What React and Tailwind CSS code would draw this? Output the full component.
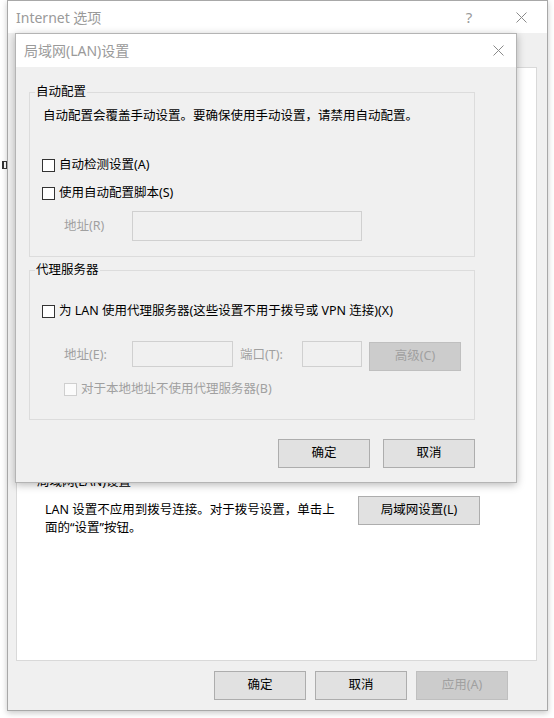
import React from "react"

const font = "font-['Noto_Sans','Noto_Sans_CJK_SC',sans-serif]"

function Check({ disabled }) {
    return (
        <span className={disabled
            ? "w-[13px] h-[13px] shrink-0 border border-[#cfcfcf] bg-[#fbfbfb]"
            : "w-[13px] h-[13px] shrink-0 border border-[#333333] bg-white"} />
    )
}

function Btn({ children, disabled, w = "w-[92px]" }) {
    return (
        <div className={`${w} h-[29px] flex items-center justify-center border ${disabled
            ? "bg-[#cccccc] border-[#bfbfbf] text-[#a0a0a0]"
            : "bg-[#e1e1e1] border-[#adadad] text-black"}`}>
            {children}
        </div>
    )
}

function CloseX({ size = 11 }) {
    return (
        <svg width={size} height={size} viewBox="0 0 11 11">
            <path d="M0.5 0.5 L10.5 10.5 M10.5 0.5 L0.5 10.5" stroke="#8a8a8a" strokeWidth="1" fill="none" />
        </svg>
    )
}

function LanDialog() {
    return (
        <div className="absolute left-[15px] top-[33px] w-[502px] h-[450px] border border-[#b4b4b4] bg-[#f0f0f0] shadow-[0_2px_8px_rgba(0,0,0,0.28)] flex flex-col">
            <div className="h-[33px] bg-white flex items-center pl-[8px]">
                <span className="text-[14px] text-[#9a9a9a]">局域网(LAN)设置</span>
                <span className="ml-auto w-[36px] flex justify-center">
                    <CloseX />
                </span>
            </div>

            <div className="flex flex-col pt-[17px] pl-[13px] text-[12.5px]">
                <fieldset className="w-[446px] border border-[#dcdcdc] m-0 p-0">
                    <legend className="ml-[5px] px-[1px] leading-[16px] text-black">自动配置</legend>
                    <div className="flex flex-col pl-[12px] pb-[15px]">
                        <p className="mt-[8px] ml-[1px] leading-[16px]">自动配置会覆盖手动设置。要确保使用手动设置，请禁用自动配置。</p>
                        <div className="mt-[33px] h-[16px] flex items-center gap-[4px]">
                            <Check />
                            <span>自动检测设置(A)</span>
                        </div>
                        <div className="mt-[12px] h-[16px] flex items-center gap-[4px]">
                            <Check />
                            <span>使用自动配置脚本(S)</span>
                        </div>
                        <div className="mt-[10px] h-[30px] flex items-center">
                            <span className="ml-[22px] w-[68px] text-[#a0a0a0]">地址(R)</span>
                            <div className="w-[230px] h-[30px] border border-[#d0d0d0]" />
                        </div>
                    </div>
                </fieldset>

                <fieldset className="mt-[5px] w-[446px] border border-[#dcdcdc] m-0 p-0">
                    <legend className="ml-[5px] px-[1px] leading-[16px] text-black">代理服务器</legend>
                    <div className="flex flex-col pl-[12px] pb-[22px]">
                        <div className="mt-[25px] h-[16px] flex items-center gap-[4px]">
                            <Check />
                            <span>为 LAN 使用代理服务器(这些设置不用于拨号或 VPN 连接)(X)</span>
                        </div>
                        <div className="mt-[22px] flex items-start">
                            <span className="ml-[22px] w-[68px] h-[28px] flex items-center text-[#a0a0a0]">地址(E):</span>
                            <div className="w-[101px] h-[26px] border border-[#d0d0d0]" />
                            <span className="ml-[7px] w-[62px] h-[28px] flex items-center text-[#a0a0a0]">端口(T):</span>
                            <div className="w-[60px] h-[26px] border border-[#d0d0d0]" />
                            <div className="ml-[7px] mt-[1px]">
                                <Btn disabled>高级(C)</Btn>
                            </div>
                        </div>
                        <div className="mt-[10px] ml-[22px] h-[16px] flex items-center gap-[4px]">
                            <Check disabled />
                            <span className="text-[#a0a0a0]">对于本地地址不使用代理服务器(B)</span>
                        </div>
                    </div>
                </fieldset>

                <div className="mt-[19px] w-[446px] flex justify-end gap-[13px]">
                    <Btn>确定</Btn>
                    <Btn>取消</Btn>
                </div>
            </div>
        </div>
    )
}

export default function App() {
    return (
        <div className={`relative w-[554px] h-[718px] bg-white overflow-hidden ${font}`}>
            <span className="absolute left-[2px] top-[161px] w-[5px] h-[8px] border border-l-2 border-[#333333]" />

            <div className="ml-[7px] w-[541px] h-[711px] border border-[#a8a8a8] bg-[#f0f0f0] shadow-[0_2px_6px_rgba(0,0,0,0.22)] flex flex-col">
                <div className="h-[32px] bg-white flex items-center pl-[8px]">
                    <span className="text-[14px] text-[#9a9a9a]">Internet 选项</span>
                    <span className="ml-auto w-[46px] text-center text-[15px] text-[#9a9a9a]">?</span>
                    <span className="ml-[6px] mr-[3px] w-[46px] flex justify-center">
                        <CloseX />
                    </span>
                </div>

                <div className="mt-[34px] ml-[8px] w-[521px] h-[594px] bg-white border border-[#d9d9d9] pt-[406px] pl-[20px] text-[12.5px]">
                    <div className="leading-[16px]">局域网(LAN)设置</div>
                    <div className="mt-[6px] flex items-start">
                        <p className="ml-[8px] mt-[5px] w-[300px] leading-[18px]">
                            LAN 设置不应用到拨号连接。对于拨号设置，单击上<br />面的“设置”按钮。
                        </p>
                        <div className="ml-[13px]">
                            <Btn w="w-[122px]">局域网设置(L)</Btn>
                        </div>
                    </div>
                </div>

                <div className="mt-[10px] flex justify-end gap-[9px] pr-[39px] text-[12.5px]">
                    <Btn>确定</Btn>
                    <Btn>取消</Btn>
                    <Btn disabled>应用(A)</Btn>
                </div>
            </div>

            <LanDialog />
        </div>
    )
}
